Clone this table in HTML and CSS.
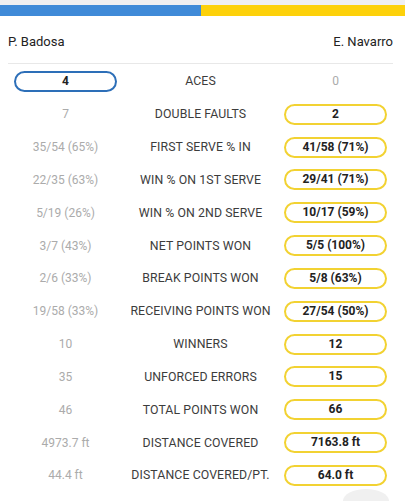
FILE: index.html
```html
<!DOCTYPE html>
<html>
<head>
<meta charset="utf-8">
<link rel="stylesheet" href="styles.css">
</head>
<body>
<div class="topstrip"></div>
<div class="bar"><div class="bar-blue"></div><div class="bar-yellow"></div></div>
<div class="content">
  <div class="names"><span>P. Badosa</span><span>E. Navarro</span></div>
  <div class="stats">
    <div class="row"><div class="val pill blue">4</div><div class="label">ACES</div><div class="val">0</div></div>
    <div class="row"><div class="val">7</div><div class="label">DOUBLE FAULTS</div><div class="val pill yellow">2</div></div>
    <div class="row"><div class="val">35/54 (65%)</div><div class="label">FIRST SERVE % IN</div><div class="val pill yellow">41/58 (71%)</div></div>
    <div class="row"><div class="val">22/35 (63%)</div><div class="label">WIN % ON 1ST SERVE</div><div class="val pill yellow">29/41 (71%)</div></div>
    <div class="row"><div class="val">5/19 (26%)</div><div class="label">WIN % ON 2ND SERVE</div><div class="val pill yellow">10/17 (59%)</div></div>
    <div class="row"><div class="val">3/7 (43%)</div><div class="label">NET POINTS WON</div><div class="val pill yellow">5/5 (100%)</div></div>
    <div class="row"><div class="val">2/6 (33%)</div><div class="label">BREAK POINTS WON</div><div class="val pill yellow">5/8 (63%)</div></div>
    <div class="row"><div class="val">19/58 (33%)</div><div class="label">RECEIVING POINTS WON</div><div class="val pill yellow">27/54 (50%)</div></div>
    <div class="row"><div class="val">10</div><div class="label">WINNERS</div><div class="val pill yellow">12</div></div>
    <div class="row"><div class="val">35</div><div class="label">UNFORCED ERRORS</div><div class="val pill yellow">15</div></div>
    <div class="row"><div class="val">46</div><div class="label">TOTAL POINTS WON</div><div class="val pill yellow">66</div></div>
    <div class="row"><div class="val">4973.7 ft</div><div class="label">DISTANCE COVERED</div><div class="val pill yellow">7163.8 ft</div></div>
    <div class="row"><div class="val">44.4 ft</div><div class="label">DISTANCE COVERED/PT.</div><div class="val pill yellow">64.0 ft</div></div>
  </div>
</div>
<div class="fab"></div>
</body>
</html>
```
FILE: styles.css
```css
html, body {
  margin: 0;
  padding: 0;
  background: #fff;
  overflow: hidden;
  height: 501px;
}
body {
  font-family: Roboto, "Liberation Sans", Arial, sans-serif;
  color: #222;
  position: relative;
}
.topstrip {
  height: 5px;
  background: #efeff1;
}
.bar {
  display: flex;
  height: 11px;
}
.bar-blue {
  width: 201px;
  background: #3f8ad8;
}
.bar-yellow {
  flex: 1;
  background: #fdd10a;
}
.content {
  padding: 0 12px 0 8px;
}
.names {
  display: flex;
  justify-content: space-between;
  align-items: center;
  font-size: 13px;
  color: #222;
  height: 43px;
  padding-top: 4px;
  border-bottom: 1px solid #e8e8e8;
}
.stats {
  display: flex;
  flex-direction: column;
  padding-top: 1px;
}
.row {
  display: grid;
  grid-template-columns: 103px 1fr 103px;
  align-items: center;
  height: 32.83px;
  padding: 0 6px;
}
.val {
  text-align: center;
  font-size: 12px;
  color: #ababab;
}
.label {
  text-align: center;
  font-size: 12.3px;
  color: #3c3c3c;
  letter-spacing: 0.1px;
}
.pill {
  height: 21px;
  box-sizing: border-box;
  border-radius: 11px;
  border: 2px solid;
  line-height: 17px;
  font-weight: bold;
  color: #222;
}
.pill.blue {
  border-color: #2d6fb8;
}
.pill.yellow {
  border-color: #f2d232;
}
.fab {
  position: absolute;
  left: 343px;
  top: 489px;
  width: 46px;
  height: 12px;
  border-radius: 50% 50% 0 0 / 100% 100% 0 0;
  background: #f0f0f0;
}
```
